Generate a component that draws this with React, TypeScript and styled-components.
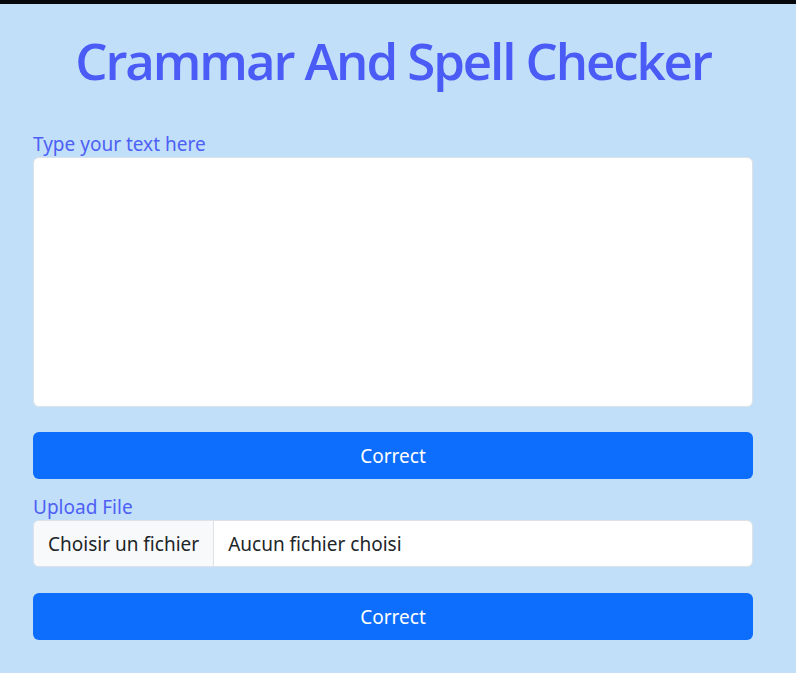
import React from "react";
import styled, { createGlobalStyle } from "styled-components";

const Global = createGlobalStyle`
  html, body { margin: 0; padding: 0; }
  body {
    background: #c2dffa;
    font-family: "Noto Sans", "Open Sans", sans-serif;
    min-height: 673px;
  }
`;

const TopBar = styled.div`
  height: 4px;
  background: #05070b;
`;

const Container = styled.main`
  width: 720px;
  margin-left: 33px;
  display: flex;
  flex-direction: column;
`;

const Title = styled.h1`
  margin: 24px 0 40px;
  text-align: center;
  white-space: nowrap;
  font-family: "Open Sans", "Noto Sans", sans-serif;
  font-size: 51px;
  font-weight: 600;
  letter-spacing: -2.1px;
  line-height: 64px;
  color: #4a5cf5;
`;

const Label = styled.label`
  display: block;
  font-size: 19px;
  line-height: 24px;
  color: #4d60f5;
  margin-bottom: 1px;
`;

const TextArea = styled.textarea`
  box-sizing: border-box;
  width: 100%;
  height: 250px;
  border: 1px solid #dee2e6;
  border-radius: 6px;
  background: #fff;
  resize: none;
  padding: 8px 12px;
  font: inherit;
  font-size: 20px;
  outline: none;
`;

const Button = styled.button<{ $top: number }>`
  box-sizing: border-box;
  width: 100%;
  height: 47px;
  margin-top: ${(p) => p.$top}px;
  border: none;
  border-radius: 6px;
  background: #0d6efd;
  color: #fff;
  font-family: inherit;
  font-size: 19px;
  cursor: pointer;
`;

const Group = styled.div`
  margin-top: 16px;
`;

const FileBox = styled.div`
  box-sizing: border-box;
  display: flex;
  height: 47px;
  border: 1px solid #dee2e6;
  border-radius: 6px;
  background: #fff;
  overflow: hidden;
  font-size: 19px;
  color: #212529;
`;

const FileButton = styled.span`
  display: flex;
  align-items: center;
  padding: 0 14px;
  background: #f8f9fa;
  border-right: 1px solid #dee2e6;
`;

const FileName = styled.span`
  display: flex;
  align-items: center;
  padding: 0 14px;
`;

export default function App() {
  return (
    <>
      <Global />
      <TopBar />
      <Container>
        <Title>Crammar And Spell Checker</Title>
        <Label htmlFor="text">Type your text here</Label>
        <TextArea id="text" />
        <Button $top={25}>Correct</Button>
        <Group>
          <Label>Upload File</Label>
          <FileBox>
            <FileButton>Choisir un fichier</FileButton>
            <FileName>Aucun fichier choisi</FileName>
          </FileBox>
        </Group>
        <Button $top={26}>Correct</Button>
      </Container>
    </>
  );
}
